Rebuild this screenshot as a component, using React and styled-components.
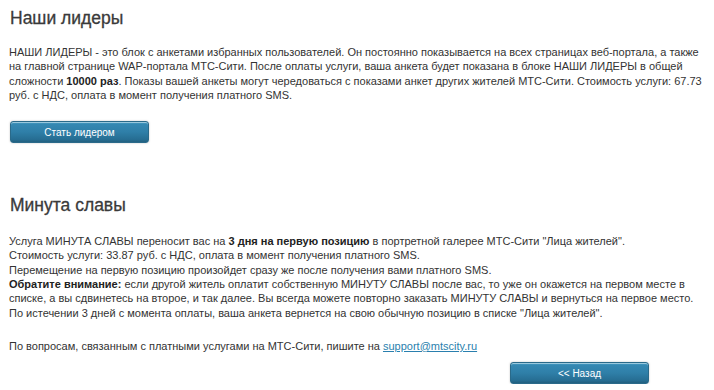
import styled, { createGlobalStyle } from "styled-components";

const GlobalStyle = createGlobalStyle`
	body {
		margin: 0;
		background: #fff;
		font-family: "Liberation Sans", Arial, sans-serif;
	}
`;

const Page = styled.div`
	padding: 0 6px 0 9px;
	color: #333;
`;

const Title = styled.h2`
	margin: ${(props) => props.$top}px 0 0 1px;
	font-size: 17.5px;
	line-height: 22px;
	font-weight: normal;
	color: #3a3a3a;
	-webkit-text-stroke: 0.3px #3a3a3a;
`;

const Text = styled.p`
	margin: ${(props) => props.$top}px 0 0;
	font-size: 11px;
	line-height: 14.3px;
	white-space: nowrap;
	b {
		color: #222;
	}
`;

const Link = styled.a`
	color: #2a7fae;
	text-decoration: underline;
`;

const ButtonRow = styled.div`
	margin-top: ${(props) => props.$top}px;
	padding-left: ${(props) => props.$left}px;
`;

const Button = styled.button`
	display: block;
	width: 139px;
	height: 22px;
	padding: 0;
	border: 1px solid #2a6a8a;
	border-radius: 3px;
	background: linear-gradient(#4aa0c6 0%, #3588b2 12%, #2f7fa8 50%, #266d92 88%, #22607f 100%);
	box-shadow: inset 0 1px 0 rgba(255, 255, 255, 0.45), 0 0 2px rgba(0, 0, 0, 0.25);
	color: #fff;
	font-family: "Liberation Sans", Arial, sans-serif;
	font-size: 10px;
	cursor: pointer;
`;

export default function App() {
	return (
		<>
			<GlobalStyle />
			<Page>
				<Title $top={7}>Наши лидеры</Title>
				<Text $top={16}>
					НАШИ ЛИДЕРЫ - это блок с анкетами избранных пользователей. Он постоянно показывается на всех страницах веб-портала, а также
					<br />
					на главной странице WAP-портала МТС-Сити. После оплаты услуги, ваша анкета будет показана в блоке НАШИ ЛИДЕРЫ в общей
					<br />
					сложности <b>10000 раз</b>. Показы вашей анкеты могут чередоваться с показами анкет других жителей МТС-Сити. Стоимость услуги: 67.73
					<br />
					руб. с НДС, оплата в момент получения платного SMS.
				</Text>
				<ButtonRow $top={19} $left={1}>
					<Button>Стать лидером</Button>
				</ButtonRow>

				<Title $top={51}>Минута славы</Title>
				<Text $top={18}>
					Услуга МИНУТА СЛАВЫ переносит вас на <b>3 дня на первую позицию</b> в портретной галерее МТС-Сити "Лица жителей".
					<br />
					Стоимость услуги: 33.87 руб. с НДС, оплата в момент получения платного SMS.
					<br />
					Перемещение на первую позицию произойдет сразу же после получения вами платного SMS.
					<br />
					<b>Обратите внимание:</b> если другой житель оплатит собственную МИНУТУ СЛАВЫ после вас, то уже он окажется на первом месте в
					<br />
					списке, а вы сдвинетесь на второе, и так далее. Вы всегда можете повторно заказать МИНУТУ СЛАВЫ и вернуться на первое место.
					<br />
					По истечении 3 дней с момента оплаты, ваша анкета вернется на свою обычную позицию в списке "Лица жителей".
				</Text>
				<Text $top={19}>
					По вопросам, связанным с платными услугами на МТС-Сити, пишите на <Link href="#">support@mtscity.ru</Link>
				</Text>
				<ButtonRow $top={9} $left={501}>
					<Button>&lt;&lt; Назад</Button>
				</ButtonRow>
			</Page>
		</>
	);
}
